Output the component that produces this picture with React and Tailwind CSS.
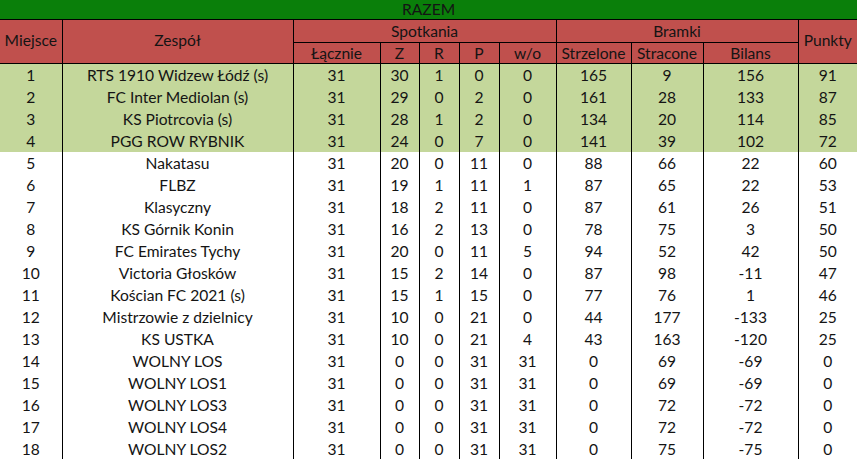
const rows = [
  [1, "RTS 1910 Widzew Łódź (s)", 31, 30, 1, 0, 0, 165, 9, 156, 91],
  [2, "FC Inter Mediolan (s)", 31, 29, 0, 2, 0, 161, 28, 133, 87],
  [3, "KS Piotrcovia (s)", 31, 28, 1, 2, 0, 134, 20, 114, 85],
  [4, "PGG ROW RYBNIK", 31, 24, 0, 7, 0, 141, 39, 102, 72],
  [5, "Nakatasu", 31, 20, 0, 11, 0, 88, 66, 22, 60],
  [6, "FLBZ", 31, 19, 1, 11, 1, 87, 65, 22, 53],
  [7, "Klasyczny", 31, 18, 2, 11, 0, 87, 61, 26, 51],
  [8, "KS Górnik Konin", 31, 16, 2, 13, 0, 78, 75, 3, 50],
  [9, "FC Emirates Tychy", 31, 20, 0, 11, 5, 94, 52, 42, 50],
  [10, "Victoria Głosków", 31, 15, 2, 14, 0, 87, 98, -11, 47],
  [11, "Kościan FC 2021 (s)", 31, 15, 1, 15, 0, 77, 76, 1, 46],
  [12, "Mistrzowie z dzielnicy", 31, 10, 0, 21, 0, 44, 177, -133, 25],
  [13, "KS USTKA", 31, 10, 0, 21, 4, 43, 163, -120, 25],
  [14, "WOLNY LOS", 31, 0, 0, 31, 31, 0, 69, -69, 0],
  [15, "WOLNY LOS1", 31, 0, 0, 31, 31, 0, 69, -69, 0],
  [16, "WOLNY LOS3", 31, 0, 0, 31, 31, 0, 72, -72, 0],
  [17, "WOLNY LOS4", 31, 0, 0, 31, 31, 0, 72, -72, 0],
  [18, "WOLNY LOS2", 31, 0, 0, 31, 31, 0, 75, -75, 0],
];

const widths = [62, 231, 87, 39, 40, 40, 57, 75, 72, 95, 59];

export default function App() {
  return (
    <div className="w-[857px] h-[459px] overflow-hidden bg-white text-[15.6px] text-[#141414] font-['Lato',sans-serif]">
      <table className="table-fixed border-collapse w-[857px]">
        <colgroup>
          {widths.map((w, i) => (
            <col key={i} style={{ width: w }} />
          ))}
        </colgroup>
        <thead>
          <tr className="h-[19px] bg-[#0a7f0a]">
            <th colSpan={11} className="p-0 font-normal leading-[18px] border-b border-black">RAZEM</th>
          </tr>
          <tr className="h-[23px] bg-[#c0504d]">
            <th rowSpan={2} className="p-0 font-normal border-r border-b border-black">Miejsce</th>
            <th rowSpan={2} className="p-0 font-normal border-r border-b border-black">Zespół</th>
            <th colSpan={5} className="p-0 font-normal border-r border-b border-black leading-[20px]">Spotkania</th>
            <th colSpan={3} className="p-0 font-normal border-r border-b border-black leading-[20px]">Bramki</th>
            <th rowSpan={2} className="p-0 font-normal border-b border-black">Punkty</th>
          </tr>
          <tr className="h-[21px] bg-[#c0504d]">
            {["Łącznie", "Z", "R", "P", "w/o", "Strzelone", "Stracone", "Bilans"].map((h) => (
              <th key={h} className="p-0 font-normal border-r border-b border-black leading-[20px]">{h}</th>
            ))}
          </tr>
        </thead>
        <tbody>
          {rows.map((r) => (
            <tr key={r[0]} className={r[0] <= 4 ? "h-[22px] bg-[#c4d79b]" : "h-[22px]"}>
              {r.map((v, i) => (
                <td
                  key={i}
                  className={i < 10 ? "p-0 text-center leading-[22px] border-r border-black whitespace-nowrap" : "p-0 text-center leading-[22px] whitespace-nowrap"}
                >
                  {v}
                </td>
              ))}
            </tr>
          ))}
        </tbody>
      </table>
    </div>
  );
}
